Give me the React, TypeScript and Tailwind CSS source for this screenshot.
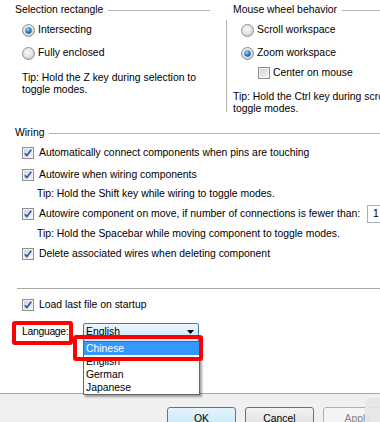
import React from "react";

function Radio({ checked }: { checked?: boolean }) {
  return (
    <svg width="13" height="13" viewBox="0 0 13 13" className="shrink-0">
      <defs>
        <radialGradient id="rbg" cx="45%" cy="40%" r="65%">
          <stop offset="0" stopColor="#f8f8f8" />
          <stop offset="0.6" stopColor="#e2e2e2" />
          <stop offset="1" stopColor="#c4c4c4" />
        </radialGradient>
        <radialGradient id="rdot" cx="40%" cy="35%" r="75%">
          <stop offset="0" stopColor="#a9e0fb" />
          <stop offset="0.5" stopColor="#2b86cf" />
          <stop offset="1" stopColor="#15467c" />
        </radialGradient>
      </defs>
      <circle cx="6.5" cy="6.5" r="6" fill="url(#rbg)" stroke="#8f9090" strokeWidth="1" />
      {checked && <circle cx="6.5" cy="6.5" r="3.2" fill="url(#rdot)" />}
    </svg>
  );
}

function Check({ checked }: { checked?: boolean }) {
  return (
    <svg width="12" height="12" viewBox="0 0 12 12" className="shrink-0">
      <defs>
        <linearGradient id="cbg" x1="0" y1="0" x2="1" y2="1">
          <stop offset="0" stopColor="#cfd3da" />
          <stop offset="1" stopColor="#f3f4f6" />
        </linearGradient>
      </defs>
      <rect x="0.5" y="0.5" width="11" height="11" fill="#f4f4f4" stroke="#8e8f8f" />
      <rect x="2" y="2" width="8" height="8" fill="url(#cbg)" />
      {checked && (
        <path d="M2.8 6.2 L4.9 8.6 L9.3 2.8" fill="none" stroke="#2e55a6" strokeWidth="1.6" strokeLinejoin="round" />
      )}
    </svg>
  );
}

function GroupHeader({ label, className }: { label: string; className: string }) {
  return (
    <div className={"flex h-[20px] items-center " + className}>
      <span className="whitespace-nowrap">{label}</span>
      <div className="ml-[5px] mt-[1px] h-px flex-1 bg-[#b4b4b4]" />
    </div>
  );
}

function RadioRow({ label, checked }: { label: string; checked?: boolean }) {
  return (
    <div className="flex h-[20px] items-center gap-[3px] whitespace-nowrap">
      <Radio checked={checked} />
      <span>{label}</span>
    </div>
  );
}

function CheckRow({ label, checked }: { label: string; checked?: boolean }) {
  return (
    <div className="flex h-[20px] items-center gap-[5px] whitespace-nowrap">
      <Check checked={checked} />
      <span>{label}</span>
    </div>
  );
}

export default function App() {
  return (
    <div className="relative flex h-[422px] w-[380px] flex-col overflow-hidden bg-white font-['Liberation_Sans',Arial,sans-serif] text-[10.4px] leading-[12px] text-black">
      {/* top groups */}
      <div className="flex h-[123px] shrink-0">
        <div className="flex w-[226px] shrink-0 flex-col">
          <GroupHeader label="Selection rectangle" className="pl-[15px] pr-[16px]" />
          <div className="flex flex-col gap-[3px] pl-[22px]">
            <RadioRow checked label="Intersecting" />
            <RadioRow label="Fully enclosed" />
          </div>
          <p className="mt-[9px] whitespace-nowrap pl-[22px] leading-[12px]">
            Tip: Hold the Z key during selection to
            <br />
            toggle modes.
          </p>
        </div>
        <div className="flex min-w-0 flex-1 flex-col">
          <GroupHeader label="Mouse wheel behavior" className="pl-[7px]" />
          <div className="flex h-[92px] flex-col border-l border-[#b4b4b4]">
            <div className="flex flex-col gap-[3px] pl-[14px]">
              <RadioRow label="Scroll workspace" />
              <RadioRow checked label="Zoom workspace" />
            </div>
            <div className="pl-[31px]">
              <div className="flex h-[20px] items-center gap-[3px] whitespace-nowrap">
                <Check />
                <span>Center on mouse</span>
              </div>
            </div>
            <p className="mt-[8px] whitespace-nowrap pl-[6px] leading-[12px]">
              Tip: Hold the Ctrl key during scrolling to
              <br />
              toggle modes.
            </p>
          </div>
        </div>
      </div>

      {/* wiring */}
      <GroupHeader label="Wiring" className="shrink-0 pl-[15px]" />
      <div className="flex flex-col pl-[22px]">
        <CheckRow checked label="Automatically connect components when pins are touching" />
        <div className="mt-[2px]">
          <CheckRow checked label="Autowire when wiring components" />
        </div>
        <div className="mt-[1px] flex h-[16px] items-center whitespace-nowrap pl-[15px]">
          Tip: Hold the Shift key while wiring to toggle modes.
        </div>
        <div className="mt-[2px] grid grid-cols-[345px_60px] items-center">
          <CheckRow checked label="Autowire component on move, if number of connections is fewer than:" />
          <div className="flex h-[18px] items-center border border-[#abadb3] bg-white pl-[5px]">1</div>
        </div>
        <div className="mt-[2px] flex h-[16px] items-center whitespace-nowrap pl-[15px]">
          Tip: Hold the Spacebar while moving component to toggle modes.
        </div>
        <div className="mt-[2px]">
          <CheckRow checked label="Delete associated wires when deleting component" />
        </div>
      </div>

      <div className="ml-[17px] mt-[24px] h-px shrink-0 bg-[#a8a8a8]" />

      <div className="mt-[6px] pl-[22px]">
        <CheckRow checked label="Load last file on startup" />
      </div>

      <div className="mt-[7px] flex h-[20px] items-center pl-[22px]">
        <span className="w-[61px] shrink-0 tracking-[-0.3px]">Language:</span>
        <div className="relative h-[19px] w-[116px]">
          <div className="flex h-full items-center justify-between rounded-[2px] border border-[#3c7fb1] bg-gradient-to-b from-[#eaf6fd] to-[#c7e5f7] pl-[2px] pr-[4px]">
            <span>English</span>
            <svg width="7" height="4" viewBox="0 0 7 4">
              <path d="M0 0 H7 L3.5 4 Z" fill="#000" />
            </svg>
          </div>
          <div className="absolute left-0 top-[18px] z-10 w-[117px] border border-[#646464] bg-white shadow-[2px_2px_2px_rgba(0,0,0,0.35)]">
            <div className="h-[13px] bg-[#3399ff] pl-[2px] leading-[13px] text-white">Chinese</div>
            <div className="h-[13px] pl-[2px] leading-[13px]">English</div>
            <div className="h-[13px] pl-[2px] leading-[13px]">German</div>
            <div className="h-[13px] pl-[2px] leading-[13px]">Japanese</div>
          </div>
        </div>
      </div>

      {/* footer */}
      <div className="mt-auto flex h-[29px] shrink-0 gap-[9px] border-t border-[#a8a8a8] bg-[#f0f0f0] pl-[167px] pt-[13px]">
        <div className="flex h-[23px] w-[69px] shrink-0 items-center justify-center rounded-[3px] border border-[#3c7fb1] bg-gradient-to-b from-[#e5f4fc] to-[#c4e5f6]">
          OK
        </div>
        <div className="flex h-[23px] w-[69px] shrink-0 items-center justify-center rounded-[3px] border border-[#707070] bg-gradient-to-b from-[#f2f2f2] to-[#dddddd]">
          Cancel
        </div>
        <div className="flex h-[23px] w-[69px] shrink-0 items-center justify-center rounded-[3px] border border-[#adb2b5] bg-[#f4f4f4] text-[#838383]">
          Apply
        </div>
      </div>

      {/* overlays */}
      <div className="absolute left-[365px] top-[398px] h-[26px] w-[18px] rounded-tl-[6px] bg-[#e6e6e6]/90" />
      <div className="absolute left-[12px] top-[321px] z-20 h-[24px] w-[61px] rounded-[3px] border-[4px] border-[#ff0000]" />
      <div className="absolute left-[73px] top-[335px] z-20 h-[26px] w-[130px] rounded-[3px] border-[4px] border-[#ff0000]" />
    </div>
  );
}
